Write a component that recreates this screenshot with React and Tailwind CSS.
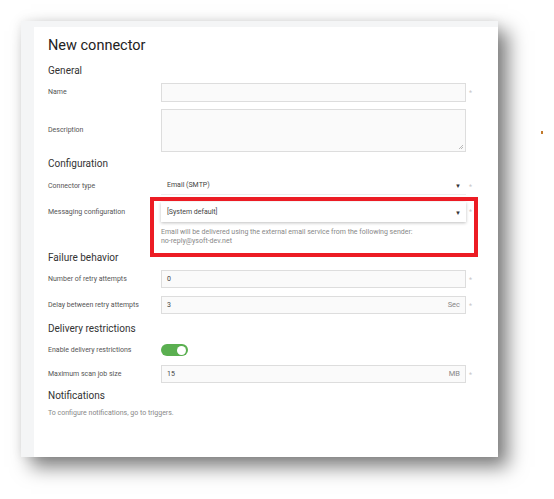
const font = { fontFamily: 'Roboto, "Liberation Sans", sans-serif' };

const Req = () => (
  <span className="w-[12px] pl-[3px] text-[7px] leading-none text-[#c8c8c8] self-start pt-[7px]">*</span>
);

const Row = ({ label, h = 18, mt = 0, children }) => (
  <div className="flex items-center" style={{ marginTop: mt, height: h }}>
    <div className="w-[113px] text-[7px] text-[#555]">{label}</div>
    {children}
  </div>
);

const Input = ({ value, unit, h = 18 }) => (
  <div className="flex">
    <div
      className="w-[305px] flex items-center justify-between px-[5px] bg-[#fafafa] border-[1.5px] border-[#ddd] text-[7px] text-[#444]"
      style={{ height: h }}
    >
      <span>{value}</span>
      {unit && <span className="text-[#888] text-[7.5px]">{unit}</span>}
    </div>
    <Req />
  </div>
);

const Section = ({ children, mt }) => (
  <div className="text-[10px] leading-[16px] text-[#333]" style={{ marginTop: mt }}>
    {children}
  </div>
);

const Arrow = () => <span className="text-[6px] text-[#333] mr-[5px]">▼</span>;

export default function App() {
  return (
    <div className="relative w-[554px] h-[499px] bg-white pl-[21px] pt-[21px] antialiased" style={font}>
      <div className="relative w-[477px] h-[436px] bg-[#f4f5f6] pt-[6px] pl-[13px] shadow-[10px_10px_18px_rgba(0,0,0,0.5),0_0_10px_rgba(0,0,0,0.08)]">
        <div className="h-full bg-white pl-[14px] pt-[9px]">
          <h1 className="text-[14.5px] leading-[20px] text-[#222]">New connector</h1>

          <Section mt={7}>General</Section>
          <Row label="Name" h={19} mt={4}>
            <Input h={19} />
          </Row>
          <Row label="Description" h={43} mt={7}>
            <div className="flex">
              <div className="relative w-[305px] h-[43px] bg-[#fafafa] border-[1.5px] border-[#ddd]">
                <svg className="absolute right-[1px] bottom-[1px]" width="6" height="6" viewBox="0 0 6 6">
                  <path d="M5 1 L1 5 M5 3 L3 5" stroke="#aaa" strokeWidth="0.8" />
                </svg>
              </div>
            </div>
          </Row>

          <Section mt={4}>Configuration</Section>
          <Row label="Connector type" h={18} mt={5}>
            <div className="flex">
              <div className="w-[305px] h-[18px] flex items-center justify-between pl-[6px] border-b border-[#eee] text-[7px] text-[#444]">
                <span>Email (SMTP)</span>
                <Arrow />
              </div>
              <Req />
            </div>
          </Row>
          <Row label="Messaging configuration" h={20} mt={7}>
            <div className="flex">
              <div className="w-[305px] h-[20px] flex items-center justify-between pl-[6px] bg-white shadow-[0_1px_3px_rgba(0,0,0,0.25)] text-[7px] text-[#444]">
                <span>[System default]</span>
                <Arrow />
              </div>
              <Req />
            </div>
          </Row>
          <div className="ml-[113px] mt-[6px] text-[7px] leading-[9px] text-[#888]">
            <div>Email will be delivered using the external email service from the following sender:</div>
            <div>no-reply@ysoft-dev.net</div>
          </div>

          <Section mt={4}>Failure behavior</Section>
          <Row label="Number of retry attempts" mt={4}>
            <Input value="0" />
          </Row>
          <Row label="Delay between retry attempts" mt={8}>
            <Input value="3" unit="Sec" />
          </Row>

          <Section mt={7}>Delivery restrictions</Section>
          <Row label="Enable delivery restrictions" h={14} mt={6}>
            <div className="w-[27px] h-[12px] rounded-full bg-[#5aaf50] flex items-center justify-end pr-[2px]">
              <div className="w-[9px] h-[9px] rounded-full bg-white" />
            </div>
          </Row>
          <Row label="Maximum scan job size" mt={8}>
            <Input value="15" unit="MB" />
          </Row>

          <Section mt={5}>Notifications</Section>
          <div className="mt-[4px] text-[7px] leading-[10px] text-[#888]">
            To configure notifications, go to triggers.
          </div>
        </div>
      </div>

      <div className="absolute left-[150px] top-[197px] w-[328px] h-[60px] border-[4px] border-[#ec1c24]" />
      <div className="absolute left-[541px] top-[131px] w-[2px] h-[3px] bg-[#c27a2c]" />
    </div>
  );
}
